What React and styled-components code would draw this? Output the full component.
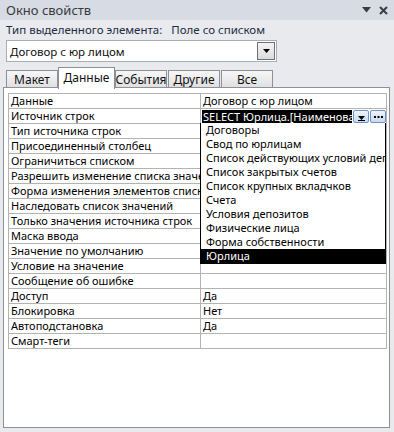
import React from 'react';
import styled, { createGlobalStyle } from 'styled-components';

const Global = createGlobalStyle`
  html, body { margin: 0; padding: 0; background: #e8eaee; }
  body { font-family: "Noto Sans", "Segoe UI", sans-serif; }
  * { box-sizing: border-box; }
`;

const Window = styled.div`
  width: 394px;
  height: 432px;
  background: #e8eaee;
  display: flex;
  flex-direction: column;
  overflow: hidden;
`;

const TitleBar = styled.div`
  height: 20px;
  background: #d6dbe4;
  display: flex;
  align-items: center;
  justify-content: space-between;
  padding: 0 6px 0 6px;
`;

const Title = styled.span`
  font-size: 13px;
  color: #3a3a3a;
  line-height: 20px;
`;

const TitleButtons = styled.div`
  display: flex;
  align-items: center;
  gap: 8px;
`;

const Content = styled.div`
  display: flex;
  flex-direction: column;
  padding: 0 0 0 6px;
  flex: 1;
`;

const SelType = styled.div`
  height: 16px;
  margin-top: 1px;
  display: flex;
  align-items: center;
  font-size: 11.5px;
  color: #1e2a44;
  gap: 9px;
  white-space: nowrap;
`;

const Combo = styled.div`
  margin-top: 3px;
  width: 271px;
  height: 22px;
  background: #fff;
  border: 1px solid #a9adb6;
  display: flex;
  align-items: center;
  justify-content: space-between;
  padding: 0 1px 0 3px;
  font-size: 11.5px;
  color: #111;
`;

const ComboButton = styled.div`
  width: 18px;
  height: 18px;
  border: 1px solid #707070;
  background: linear-gradient(#f4f4f4, #dcdcdc);
  display: flex;
  align-items: center;
  justify-content: center;
`;

const TabStrip = styled.div`
  margin-top: 4px;
  height: 22px;
  display: flex;
  align-items: flex-end;
  position: relative;
  z-index: 2;
`;

const Tab = styled.div`
  width: ${p => (p.$active ? 57 : 52)}px;
  height: ${p => (p.$active ? 22 : 18)}px;
  margin-left: ${p => (p.$gap ? 1 : 0)}px;
  border: 1px solid #8d9096;
  border-bottom: ${p => (p.$active ? 'none' : '1px solid #8d9096')};
  background: ${p => (p.$active ? '#ffffff' : 'linear-gradient(#f7f7f7, #e0e0e0)')};
  display: flex;
  align-items: center;
  justify-content: center;
  font-size: 12px;
  color: #111;
  padding-bottom: ${p => (p.$active ? 2 : 0)}px;
  margin-bottom: ${p => (p.$active ? -1 : 0)}px;
`;

const Panel = styled.div`
  margin: -1px 4px 4px -3px;
  flex: 1;
  background: #fff;
  border: 1px solid #8d9096;
  padding: 5px 2px 0 4px;
  position: relative;
  z-index: 1;
`;

const Grid = styled.div`
  border-top: 1px solid #b3b3b3;
  border-left: 1px solid #b3b3b3;
  border-right: 1px solid #b3b3b3;
`;

const Row = styled.div`
  display: grid;
  grid-template-columns: 192px minmax(0, 1fr);
  height: 15px;
  border-bottom: 1px solid #b3b3b3;
  font-size: 11px;
  color: #000;
`;

const NameCell = styled.div`
  border-right: 1px solid #b3b3b3;
  padding-left: 2px;
  line-height: 14px;
  white-space: nowrap;
  overflow: hidden;
`;

const ValueCell = styled.div`
  position: relative;
  padding-left: 2px;
  line-height: 14px;
  white-space: nowrap;
  display: flex;
  align-items: stretch;
  min-width: 0;
`;

const SelectedText = styled.div`
  flex: 1 1 0;
  min-width: 0;
  background: #000;
  color: #fff;
  margin: 1px 0 0 -1px;
  padding-left: 1px;
  line-height: 13px;
  overflow: hidden;
  white-space: nowrap;
`;

const SmallButton = styled.div`
  flex: 0 0 16px;
  margin: 1px 0 0 1px;
  background: linear-gradient(#eef4fc, #c6daf1);
  border: 1px solid #6f93c0;
  border-radius: 2px;
  display: flex;
  align-items: ${p => (p.$bottom ? 'flex-end' : 'center')};
  justify-content: center;
  padding-bottom: ${p => (p.$bottom ? 1 : 0)}px;
`;

const List = styled.div`
  position: absolute;
  top: 100%;
  left: -1px;
  right: 0;
  background: #fff;
  border: 1px solid #000;
  border-top: none;
  padding: 0;
  z-index: 5;
`;

const ListItem = styled.div`
  height: 14px;
  line-height: 14px;
  padding-left: 5px;
  font-size: 11px;
  white-space: nowrap;
  overflow: hidden;
  background: ${p => (p.$selected ? '#000' : '#fff')};
  color: ${p => (p.$selected ? '#fff' : '#000')};
`;

const rows = [
  ['Данные', 'Договор с юр лицом'],
  ['Источник строк', null],
  ['Тип источника строк', ''],
  ['Присоединенный столбец', ''],
  ['Ограничиться списком', ''],
  ['Разрешить изменение списка значений', ''],
  ['Форма изменения элементов списка', ''],
  ['Наследовать список значений', ''],
  ['Только значения источника строк', ''],
  ['Маска ввода', ''],
  ['Значение по умолчанию', ''],
  ['Условие на значение', ''],
  ['Сообщение об ошибке', ''],
  ['Доступ', 'Да'],
  ['Блокировка', 'Нет'],
  ['Автоподстановка', 'Да'],
  ['Смарт-теги', ''],
];

const items = [
  'Договоры',
  'Свод по юрлицам',
  'Список действующих условий депозитов',
  'Список закрытых счетов',
  'Список крупных вкладчков',
  'Счета',
  'Условия депозитов',
  'Физические лица',
  'Форма собственности',
  'Юрлица',
];

const tabs = ['Макет', 'Данные', 'События', 'Другие', 'Все'];

export default function App() {
  return (
    <>
      <Global />
      <Window>
        <TitleBar>
          <Title>Окно свойств</Title>
          <TitleButtons>
            <svg width="9" height="6" viewBox="0 0 9 6"><path d="M0 0h9L4.5 5.5z" fill="#3c3c3c" /></svg>
            <svg width="9" height="9" viewBox="0 0 9 9"><path d="M1 1l7 7M8 1L1 8" stroke="#3c3c3c" strokeWidth="2" /></svg>
          </TitleButtons>
        </TitleBar>
        <Content>
          <SelType>
            <span>Тип выделенного элемента:</span>
            <span>Поле со списком</span>
          </SelType>
          <Combo>
            <span>Договор с юр лицом</span>
            <ComboButton>
              <svg width="7" height="4" viewBox="0 0 7 4"><path d="M0 0h7L3.5 4z" fill="#000" /></svg>
            </ComboButton>
          </Combo>
          <TabStrip>
            {tabs.map((t, i) => (
              <Tab key={t} $active={i === 1} $gap={i >= 3}>{t}</Tab>
            ))}
          </TabStrip>
          <Panel>
            <Grid>
              {rows.map(([name, value]) => (
                <Row key={name}>
                  <NameCell>{name}</NameCell>
                  {value === null ? (
                    <ValueCell>
                      <SelectedText>SELECT Юрлица.[Наименование]</SelectedText>
                      <SmallButton $bottom>
                        <svg width="7" height="5" viewBox="0 0 7 5"><path d="M0 0h7L3.5 4z M0 4h7v1H0z" fill="#000" /></svg>
                      </SmallButton>
                      <SmallButton>
                        <svg width="9" height="2" viewBox="0 0 9 2"><path d="M0 0h2v2H0zM3.5 0h2v2h-2zM7 0h2v2H7z" fill="#000" /></svg>
                      </SmallButton>
                      <List>
                        {items.map((it, k) => (
                          <ListItem key={it} $selected={k === items.length - 1}>{it}</ListItem>
                        ))}
                      </List>
                    </ValueCell>
                  ) : (
                    <ValueCell>{value}</ValueCell>
                  )}
                </Row>
              ))}
            </Grid>
          </Panel>
        </Content>
      </Window>
    </>
  );
}
